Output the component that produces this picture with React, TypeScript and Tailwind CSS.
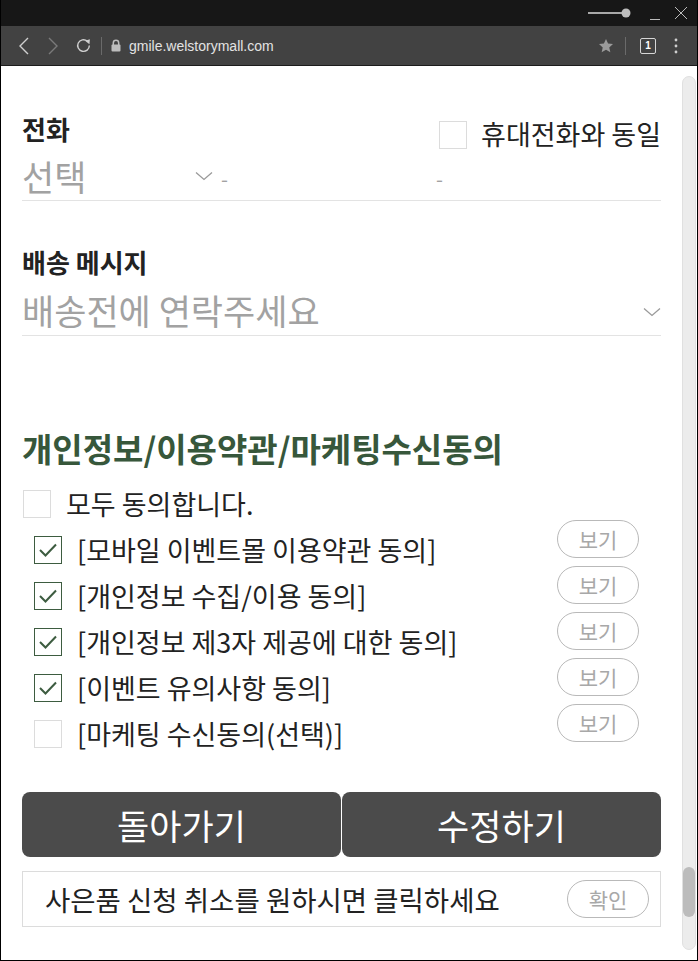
import React from 'react';

const KR = { fontFamily: '"Noto Sans CJK KR", "Noto Sans", sans-serif' };

const Chevron: React.FC = () => (
  <svg width="18" height="10" viewBox="0 0 18 10" fill="none">
    <path d="M1 1.5 L9 8.5 L17 1.5" stroke="#9a9a9a" strokeWidth="1.3" />
  </svg>
);

const CheckBox: React.FC<{ checked?: boolean }> = ({ checked }) =>
  checked ? (
    <div className="w-[28px] h-[28px] shrink-0 border border-[#3d5c40] bg-white flex items-center justify-center">
      <svg width="20" height="16" viewBox="0 0 20 16" fill="none">
        <path d="M2 8 L7.5 13.5 L18 2.5" stroke="#3d5c40" strokeWidth="2" />
      </svg>
    </div>
  ) : (
    <div className="w-[28px] h-[28px] shrink-0 border border-[#dcdcdc] bg-white" />
  );

const PillButton: React.FC<{ label: string }> = ({ label }) => (
  <button className="w-[82px] h-[38px] rounded-full border border-[#b9b9b9] bg-white text-[21px] leading-none text-[#a8a8a8] flex items-center justify-center shrink-0">
    {label}
  </button>
);

const terms = [
  { label: '[모바일 이벤트몰 이용약관 동의]', checked: true },
  { label: '[개인정보 수집/이용 동의]', checked: true },
  { label: '[개인정보 제3자 제공에 대한 동의]', checked: true },
  { label: '[이벤트 유의사항 동의]', checked: true },
  { label: '[마케팅 수신동의(선택)]', checked: false },
];

const TitleBar: React.FC = () => (
  <div className="h-[26px] bg-[#171717] flex items-center justify-end">
    <svg width="44" height="12" viewBox="0 0 44 12" className="mr-[17px]">
      <line x1="0" y1="6" x2="36" y2="6" stroke="#a8a8a8" strokeWidth="2" />
      <circle cx="38" cy="6" r="4.5" fill="#bdbdbd" />
    </svg>
    <svg width="12" height="12" viewBox="0 0 12 12" className="mr-[13px] mt-[6px]">
      <line x1="1" y1="9.5" x2="11" y2="9.5" stroke="#bbbbbb" strokeWidth="1" />
    </svg>
    <svg width="14" height="14" viewBox="0 0 14 14" className="mr-[9px]">
      <path d="M1 1 L13 13 M13 1 L1 13" stroke="#bbbbbb" strokeWidth="1" />
    </svg>
  </div>
);

const Toolbar: React.FC = () => (
  <div className="h-[40px] bg-[#424242] border-b border-[#1c1c1c] flex items-center">
    <svg width="12" height="18" viewBox="0 0 12 18" className="ml-[17px]">
      <path d="M10 1 L2 9 L10 17" stroke="#cfcfcf" strokeWidth="1.4" fill="none" />
    </svg>
    <svg width="12" height="18" viewBox="0 0 12 18" className="ml-[17px]">
      <path d="M2 1 L10 9 L2 17" stroke="#7a7a7a" strokeWidth="1.4" fill="none" />
    </svg>
    <svg width="17" height="17" viewBox="0 0 16 16" className="ml-[16px]">
      <path d="M13.5 8 A5.5 5.5 0 1 1 11.5 3.8" stroke="#cfcfcf" strokeWidth="1.3" fill="none" />
      <path d="M9.5 3.5 L14 2 L13.6 6.8 Z" fill="#cfcfcf" />
    </svg>
    <div className="ml-[9px] w-px h-[18px] bg-[#6a6a6a]" />
    <svg width="10" height="13" viewBox="0 0 10 13" className="ml-[9px]">
      <path d="M2.3 6 V4 A2.7 2.7 0 0 1 7.7 4 V6" stroke="#bdbdbd" strokeWidth="1.5" fill="none" />
      <rect x="0.5" y="5.5" width="9" height="7" rx="1" fill="#bdbdbd" />
    </svg>
    <span
      className="ml-[8px] text-[14px] text-[#e2e2e2] leading-none"
      style={{ fontFamily: '"Liberation Sans", Arial, sans-serif' }}
    >
      gmile.welstorymall.com
    </span>
    <div className="ml-auto flex items-center">
      <svg width="16" height="16" viewBox="0 0 24 24">
        <path
          d="M12 1.5 L15.1 8.4 L22.5 9.1 L16.9 14.1 L18.5 21.5 L12 17.7 L5.5 21.5 L7.1 14.1 L1.5 9.1 L8.9 8.4 Z"
          fill="#9b9b9b"
        />
      </svg>
      <div className="ml-[11px] w-px h-[18px] bg-[#6a6a6a]" />
      <div
        className="ml-[14px] w-[16px] h-[16px] border border-[#d6d6d6] rounded-[2px] flex items-center justify-center text-[10px] font-bold text-white leading-none"
        style={{ fontFamily: '"Liberation Sans", Arial, sans-serif' }}
      >
        1
      </div>
      <svg width="4" height="16" viewBox="0 0 4 16" className="ml-[18px] mr-[19px]">
        <circle cx="2" cy="2" r="1.4" fill="#cfcfcf" />
        <circle cx="2" cy="8" r="1.4" fill="#cfcfcf" />
        <circle cx="2" cy="14" r="1.4" fill="#cfcfcf" />
      </svg>
    </div>
  </div>
);

const App: React.FC = () => {
  return (
    <div className="w-[698px] h-[961px] bg-black flex flex-col border-x border-b border-black overflow-hidden">
      <TitleBar />
      <Toolbar />

      <div className="flex-1 flex bg-white text-[#222]" style={KR}>
        {/* Page content */}
        <div className="w-[681px] px-[21px] pt-[48px]">
          {/* Phone */}
          <div className="flex items-start justify-between h-[38px]">
            <div className="text-[26px] font-bold leading-[30px] text-[#222]">전화</div>
            <div className="flex items-start">
              <div className="mt-[7px]">
                <CheckBox />
              </div>
              <span className="ml-[14px] mt-[5px] text-[27px] leading-[30px]">휴대전화와 동일</span>
            </div>
          </div>
          <div className="h-[49px] border-b border-[#e3e3e3] flex items-start pt-[4px]">
            <div className="w-[191px] flex items-center justify-between h-[40px]">
              <span className="text-[35px] leading-[40px] text-[#a2a2a2]">선택</span>
              <Chevron />
            </div>
            <span className="ml-[8px] h-[40px] flex items-center pt-[5px] text-[20px] text-[#a2a2a2]">-</span>
            <span className="ml-[208px] h-[40px] flex items-center pt-[5px] text-[20px] text-[#a2a2a2]">-</span>
          </div>

          {/* Delivery message */}
          <div className="mt-[46px] text-[26px] font-bold leading-[30px]">배송 메시지</div>
          <div className="mt-[13px] h-[46px] border-b border-[#e3e3e3] flex items-start justify-between">
            <span className="text-[35px] leading-[40px] text-[#a2a2a2]">배송전에 연락주세요</span>
            <div className="h-[40px] flex items-center pt-[4px]">
              <Chevron />
            </div>
          </div>

          {/* Agreements */}
          <h2 className="mt-[92px] text-[33px] font-bold leading-[40px] text-[#37573b]">
            개인정보/이용약관/마케팅수신동의
          </h2>
          <div className="mt-[22px] flex items-center h-[28px]">
            <div className="ml-[1px]">
              <CheckBox />
            </div>
            <span className="ml-[15px] text-[27px] leading-[30px]">모두 동의합니다.</span>
          </div>
          <div className="mt-[9px]">
            {terms.map((t) => (
              <div key={t.label} className="h-[46px] flex items-start">
                <div className="ml-[12px] mt-[9px]">
                  <CheckBox checked={t.checked} />
                </div>
                <span className="ml-[15px] mt-[8px] text-[27px] leading-[30px]">{t.label}</span>
                <div className="ml-auto mr-[22px] -mt-[7px]">
                  <PillButton label="보기" />
                </div>
              </div>
            ))}
          </div>

          {/* Actions */}
          <div className="mt-[35px] grid grid-cols-2 gap-[1px] h-[65px]">
            <button className="bg-[#4b4b4b] rounded-[8px] text-white text-[35px] leading-none">돌아가기</button>
            <button className="bg-[#4b4b4b] rounded-[8px] text-white text-[35px] leading-none">수정하기</button>
          </div>
          <div className="mt-[14px] h-[56px] border border-[#dcdcdc] flex items-center pl-[22px] pr-[11px]">
            <span className="text-[27.5px] leading-[30px]">사은품 신청 취소를 원하시면 클릭하세요</span>
            <div className="ml-auto">
              <PillButton label="확인" />
            </div>
          </div>
        </div>

        {/* Scrollbar */}
        <div className="w-[15px] pt-[10px] pb-[10px] pr-[1px] flex">
          <div className="w-[14px] h-full rounded-full bg-[#ececec] border border-[#e0e0e0] flex flex-col justify-end pb-[32px]">
            <div className="h-[50px] rounded-full bg-[#bcbcbc]" />
          </div>
        </div>
      </div>
    </div>
  );
};

export default App;
